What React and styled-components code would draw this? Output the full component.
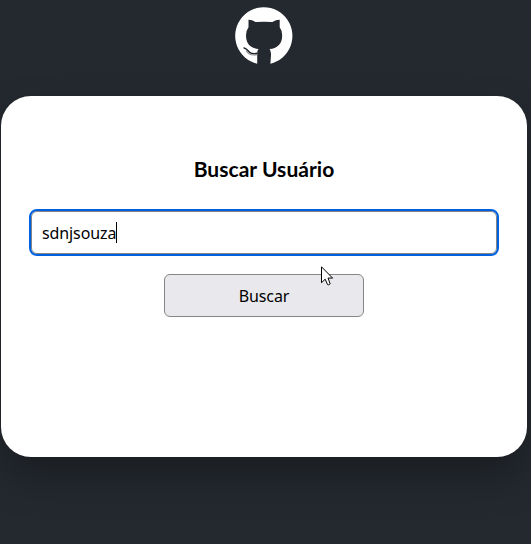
import React from "react";
import styled, { createGlobalStyle } from "styled-components";

const GlobalStyle = createGlobalStyle`
  * { box-sizing: border-box; }
  body { margin: 0; background: #24292f; overflow: hidden; }
`;

const Page = styled.main`
  height: 544px;
  padding: 7px 4px 0 1px;
  display: flex;
  flex-direction: column;
  align-items: center;
`;

const Logo = styled.svg`
  width: 58px;
  height: 59px;
  margin-bottom: 30px;
  flex: none;
`;

const Card = styled.form`
  width: 100%;
  height: 361px;
  padding: 59px 30px 0;
  display: flex;
  flex-direction: column;
  align-items: center;
  background: #fff;
  border-radius: 30px;
  box-shadow: 0 20px 40px rgba(0, 0, 0, 0.27);
`;

const Title = styled.h1`
  margin: 0 0 28px;
  font: 700 21px/28px Lato, sans-serif;
  letter-spacing: 0.04px;
  color: #000;
  white-space: nowrap;
`;

const Field = styled.div`
  width: 466px;
  height: 43px;
  margin-bottom: 20px;
  padding: 0 10px;
  display: flex;
  align-items: center;
  border: 1px solid #858585;
  border-radius: 6px;
  outline: 2px solid #0060df;
  font: 400 16px/22px "Noto Sans", sans-serif;
  letter-spacing: -0.1px;
  color: #000;
`;

const Caret = styled.span`
  width: 1px;
  height: 21px;
  background: #000;
`;

const Button = styled.button`
  width: 200px;
  height: 43px;
  padding: 0;
  border: 1px solid #858585;
  border-radius: 6px;
  background: #e9e9ed;
  font: 400 16px/22px "Noto Sans", sans-serif;
  letter-spacing: -0.1px;
  color: #000;
`;

const Pointer = styled.svg`
  position: absolute;
  left: 321px;
  top: 266px;
  width: 13px;
  height: 20px;
`;

export default function App() {
  return (
    <>
      <GlobalStyle />
      <Page>
        <Logo viewBox="0 0 58 59" role="img" aria-label="GitHub">
          <path
            fill="#fff"
            d="M22.2 56.7A28.6 28.6 0 1 1 35.4 56.7L36 48.5Q36.3 44.5 34.6 42C42 41.2 47.2 37.2 47.2 28.4Q47.2 23.6 44.7 20.3V12.8Q41.4 12.6 37.4 15.1Q29 14.5 20.6 15.1Q16.6 12.6 13.5 12.8V20.3Q11 23.6 11 28.4C11 37.2 16.2 41.2 23.6 42Q22.2 43.3 22.2 45.9Z"
          />
          <path
            fill="none"
            stroke="#24292f"
            strokeWidth="1.6"
            d="M8.5 40.7C12.3 41.1 12.8 45.1 16.3 46.3Q19 47.1 22.5 46.2"
          />
          <path
            fill="none"
            stroke="#8c8d8c"
            strokeWidth="1.1"
            d="M11.1 43.7C13.5 47.5 17 48.8 22.3 47.6"
          />
        </Logo>
        <Card>
          <Title>Buscar Usuário</Title>
          <Field role="textbox">
            sdnjsouza
            <Caret />
          </Field>
          <Button type="button">Buscar</Button>
        </Card>
      </Page>
      <Pointer viewBox="0 0 13 20">
        <path
          d="M.5 .8V16.7L4.2 13.2L6.5 18.5Q7.5 19.5 9.2 17.8L7 12.1H11.6Z"
          fill="#fff"
          stroke="#000"
          strokeWidth="1"
        />
      </Pointer>
    </>
  );
}
